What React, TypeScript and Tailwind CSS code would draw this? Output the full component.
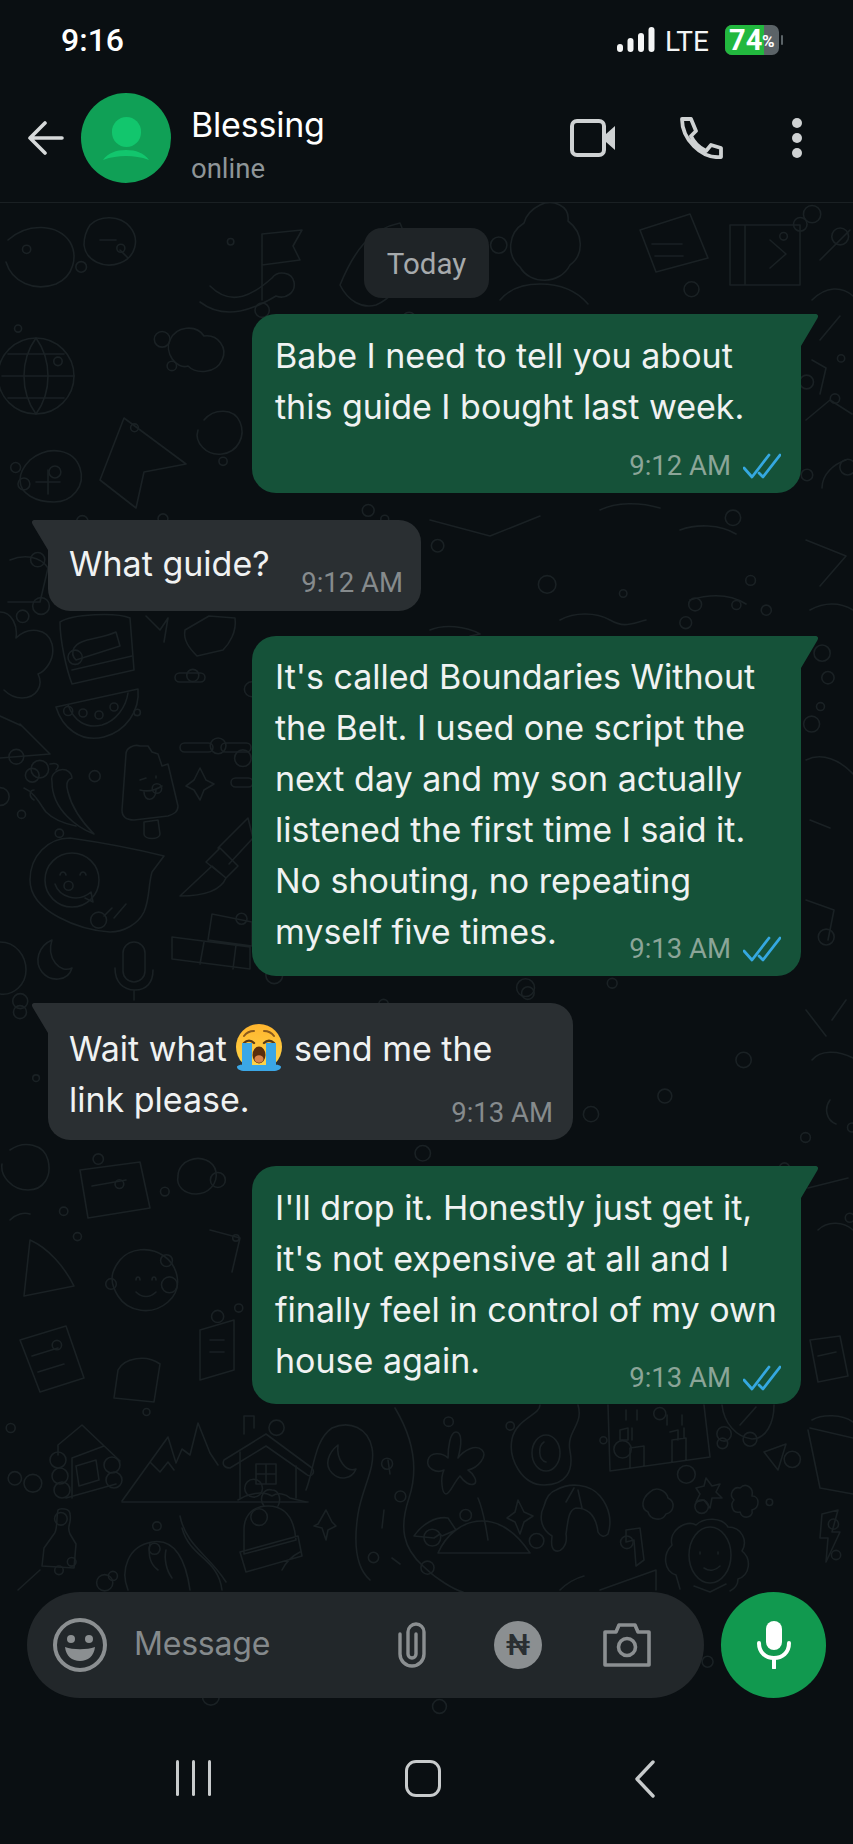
import type { ReactNode } from "react";

const FONT = "font-['Roboto','Liberation_Sans',sans-serif]";

// scattered little rings, seeded so that every run draws the same wallpaper
function ringList() {
  const rings: { x: number; y: number; r: number }[] = [];
  let seed = 41;
  const next = () => {
    seed = (seed * 16807) % 2147483647;
    return seed / 2147483647;
  };
  for (let i = 0; i < 230; i++) {
    rings.push({ x: next() * 853, y: 205 + next() * 1505, r: 3 + next() * 6 });
  }
  return rings;
}

function Wallpaper() {
  return (
    <svg
      className="absolute inset-0 w-full h-full"
      viewBox="0 203 853 1512"
      fill="none"
      stroke="#1a2124"
      strokeWidth="1.6"
      strokeLinecap="round"
      strokeLinejoin="round"
    >
      {ringList().map((c, i) => (
        <circle key={i} cx={c.x} cy={c.y} r={c.r} />
      ))}

      {/* top strip */}
      <path d="M262 300V234l40-4-9 16 7 14-38 5" />
      <path d="M210 286c22 22 44 8 62-8 6-8 20-6 22 4s-8 18-18 14c-20 12-50 26-76 6" />
      <path d="M8 240c20-18 50-16 62 2 8 14 4 34-14 42-22 8-44-2-50-22" />
      <path d="M340 285c14-34 30-56 60-62 14 30 4 70-24 82-14 4-28-4-36-20z" />
      <path d="M540 205c12-6 30 0 28 16 16 12 16 34 2 44-10 20-40 20-50 2-14-12-12-34 4-44 2-8 8-14 16-18z" />
      <path d="M500 300c10-12 24-16 40-16 20 0 36 6 48 20" />
      <path d="M640 230l50-16 18 44-52 14zM652 244h30M655 256h28" />
      <path d="M730 225h70v60h-70zM745 225v60M770 240l16 14-16 14" />
      <path d="M820 260l30-30M812 300c14-14 30-14 41-4" />
      <path d="M90 225c10-10 30-10 40 2s6 30-10 36-34-2-36-18c0-8 2-14 6-20zM100 240h16M120 250l8 8" />

      {/* left column, upper part */}
      <circle cx="36" cy="376" r="38" />
      <path d="M2 376h72M36 338c-16 22-16 54 0 76M36 338c16 22 16 54 0 76M8 354h56M8 398h56" />
      <path d="M100 480l24-62 62 46-42 8-8 36z" />
      <path d="M170 340c6-14 26-16 34-4 14-2 24 12 18 24-6 14-26 14-34 6-12 4-24-14-18-26z" />
      <path d="M30 460c20-16 44-10 50 8s-8 34-26 34-34-8-34-22c0-8 4-14 10-20z" />
      <path d="M48 470v24M36 482h24" />
      <path d="M100 540l56-14 14 44-56 14zM116 552l20-6" />
      <path d="M204 420c10-12 30-12 36 2s-2 30-18 32-28-12-24-24" />
      <path d="M10 560c14-6 30-4 38 8l-8 34-32 0" />
      <path d="M188 590c-8-14-2-28 14-32l36 6" />

      {/* purse and cloud */}
      <path d="M60 622c12-8 56-10 70-4l4 52-62 14c-6-16-12-44-12-62z" />
      <path d="M74 648c6-10 24-8 42-16l4 14-44 14c-4-4-4-8-2-12zM72 670l60-14" />
      <path d="M0 612c12 0 18 14 16 26 12-12 32-10 36 6s-8 28-14 30c6 12-2 24-16 24-8 0-14-4-18-8" />
      <path d="M185 630l24-14 26 2c2 14-6 26-12 32l-26 6c-8-8-14-16-12-26z" />
      <path d="M146 616l14 14 8-12-4 24" />
      <rect x="175" y="673" width="30" height="9" rx="4.5" />

      {/* watermelon */}
      <path d="M56 707l82-18c2 22-12 42-34 48-24 6-42-10-48-30z" />
      <path d="M68 705c6 16 18 24 34 20 14-4 24-18 26-32" />
      <circle cx="83" cy="713" r="4" />
      <circle cx="99" cy="715" r="4" />
      <circle cx="114" cy="707" r="4" />

      {/* triangle */}
      <path d="M0 716l22 10-2-2 30 30-50 4" />

      {/* chili */}
      <path d="M52 782c-2-8 6-14 14-12 4 2 6 4 6 8-6 2-6 8-4 14 4 16 16 32 26 42-16-6-42-24-42-52z" />
      <path d="M24 788c10 4 16 16 22 24 8 8 20 12 30 14" />
      <path d="M34 800c-6-4-4-10 0-10" />
      <path d="M56 770c4-4 2-8-6-6" />

      {/* popsicle */}
      <path d="M122 810l4-56c0-6 8-10 14-8l8 0 4 6 6 2 4 12 6-2 10 42c0 6-4 8-10 10l-34 4c-8 0-12-4-12-10z" />
      <path d="M144 822l14-2 2 14c0 6-16 6-16 0zM140 780l6-2M156 776l0 2M140 790c8 2 16 0 22-4M144 792c0 10 12 10 12-2" />
      <path d="M200 768l6 12 8 4-10 6-4 10-6-10-8-4 8-6z" />
      <rect x="180" y="743" width="33" height="9" rx="4.5" />
      <rect x="221" y="743" width="30" height="9" rx="4.5" />
      <rect x="231" y="778" width="22" height="9" rx="4.5" />

      {/* smiley speech blob */}
      <path d="M30 880c0-24 18-42 40-42 28 4 62 10 94 18l-12 16c-4 14-2 26-8 40-6 12-20 20-34 20-30-2-80-20-80-52z" />
      <circle cx="72" cy="880" r="27" />
      <path d="M60 875c1-4 5-4 6 0M80 875c1-4 5-4 6 0M55 884c4 12 22 20 36 8l2 10-8-4" />
      <path d="M104 916l8-8M114 918l12-14" />

      {/* pen */}
      <path d="M180 896l32-30 14 12c-6 14-24 18-46 18zM206 862l14-14 18 18-12 12zM218 848l30-30 5 20-24 26" />

      {/* panes */}
      <path d="M172 937l78 10v22l-78-10zM212 914l40 8v24l-44-6zM204 942l-4 22M236 945l-3 24" />

      {/* moon and capsule */}
      <path d="M52 940c-14 6-18 22-10 32s26 10 30-4c-12 6-26-10-20-28z" />
      <rect x="123" y="942" width="22" height="40" rx="11" />
      <path d="M115 968c0 14 8 22 20 22s18-8 18-20M134 990v10" />
      <path d="M0 942c16 0 26 14 26 28s-12 26-26 24" />

      {/* left column, under bubble four */}
      <path d="M10 1150c14-10 34-6 38 10s-4 30-20 30-28-14-26-26" />
      <path d="M80 1170l60-8 10 46-62 10z M92 1186l34-6" />
      <path d="M190 1160c10-4 24 0 26 12s-8 22-20 22-20-8-18-18c0-8 6-14 12-16z" />
      <path d="M30 1240c18 8 34 26 44 46l-50 10z" />
      <path d="M120 1260c10-12 30-14 44-4s20 32 4 46-40 10-50-6-6-26 2-36z" />
      <path d="M136 1280c0-4 4-4 4 0M152 1280c0-4 4-4 4 0M136 1292c6 6 14 6 20 0" />
      <path d="M200 1330l34-10v50l-34 10zM210 1340h14M210 1352h14" />
      <path d="M20 1340l46-14 18 52-44 14z M32 1356l26-8M38 1372l26-8" />
      <path d="M118 1370c6-12 28-16 42-6l-6 38-40-4z" />
      <path d="M10 1220c6-6 14-8 20-6M210 1230l30 8-8 34" />

      {/* cabin */}
      <path d="M58 1445l24-20 38 36M58 1445v10M72 1458l32-12M72 1458v40" />
      <circle cx="58" cy="1460" r="8" />
      <circle cx="60" cy="1476" r="8" />
      <circle cx="62" cy="1490" r="8" />
      <circle cx="112" cy="1465" r="8" />
      <circle cx="114" cy="1480" r="8" />
      <path d="M76 1466l20-6 3 20-20 6zM66 1498l50-14" />
      {/* mountains */}
      <path d="M122 1501l46-64 8 26 6-14 8 6 8-32 12 30 8 12M150 1462l10 10 8-10 6 8" />
      <path d="M122 1502h186" />
      {/* house */}
      <path d="M224 1460l42-26 46 34c4 6-2 10-6 6l-40-28-36 22c-6 0-8-4-6-8zM244 1434v-18h10v12" />
      <path d="M240 1452v46M296 1466v32M256 1464l20 0 0 20-20 0zM266 1464v20M256 1474h20" />
      <path d="M238 1500c10-6 24-10 34-4 6-4 14-2 18 2l16 4" />
      <path d="M338 1445c-10 8-14 20-6 28s20 6 24-4c-10 4-20-10-18-24z" />
      {/* road */}
      <path d="M306 1490c8-20 8-50 26-62 18-8 36 0 40 20 4 20-10 40-14 66s-4 52 12 66" />
      <path d="M395 1408c18 30 24 60 14 90s-6 50 14 68c14 14 32 24 40 26" />
      <path d="M180 1516c6 30 30 40 46 66M388 1460l2 14M384 1510l-2 18M392 1558l8 6" />
      {/* flower and tree */}
      <path d="M460 1476c-6 6-10 18-14 18s-6-16-2-24c-8 4-18-2-16-10s14-8 20-2c0-10 2-26 8-26s6 12 2 26c6-8 18-14 24-8s-4 18-14 20c6 4 10 12 6 14s-10-2-14-8z" />
      <path d="M478 1498c6 14 8 30 10 42M518 1500l6 12 9 4-9 6-4 12-5-12-8-4 8-6z" />
      {/* umbrella */}
      <path d="M438 1553c8-18 24-32 44-32s36 14 48 32zM414 1536c8-12 22-20 34-18l8 12-14 6-2-2-6 4z" />
      {/* egg */}
      <path d="M540 1405c0 10-24 14-28 34s10 46 32 46 30-14 26-34 14-26 8-46" />
      <ellipse cx="546" cy="1453" rx="14" ry="18" />
      <path d="M544 1442c-6 4-6 18 2 20" />
      {/* croissant */}
      <path d="M556 1490c14-8 34-6 44 6s12 26 8 38c-4 4-8 2-10-2-2-16-10-24-22-24-8 2-8 14-10 26 2 12-6 20-12 16-4-4-2-10-2-14-10-6-14-18-8-30 2-8 6-14 12-16zM566 1502l8-14M582 1508l-4-18" />
      <path d="M626 1530l14-2 4 32-8 6-2-26-8 2z" />
      {/* buildings */}
      <path d="M608 1405l2 66 100-14-6-52M626 1410v10M637 1410v10M667 1415v10M682 1415v10M620 1430l8-2 0 12-8 0zM632 1428v12M670 1432l8-2v10M684 1428v10M630 1468v-20l14-2v20M672 1462v-22l14-2v22" />
      <path d="M722 1405c2 18 14 32 30 34 14 0 22-16 22-34M740 1425l16-18" />
      <path d="M764 1452l22-8-8 26z" />
      <path d="M706 1478l6 8 8-2-4 8 6 6-10 0-2 10-6-8-8 2 4-8-4-6 8-2z" />
      <path d="M740 1488c6-6 14 0 12 8 8 0 8 12 0 14 2 8-10 10-12 2-8 2-10-8-6-12-6-6 0-14 6-12z" />
      <path d="M650 1492c6-6 16-2 18 6 8 4 6 14-2 16-4 8-16 6-18-2-8-4-6-14 2-20z" />
      <path d="M810 1428l43 10M808 1430l12 58 33 6" />
      <path d="M822 1514l16-4-6 22 8 0-14 30 2-24-8 0z" />
      {/* person with curls */}
      <path d="M672 1545c-4-14 14-26 24-20 8-8 26-8 32 2 14 0 20 14 14 24 10 8 8 24-4 28 0 6-4 10-8 12M672 1545c-10 10-8 26 4 30l4 14" />
      <ellipse cx="710" cy="1555" rx="21" ry="28" />
      <path d="M700 1552v2M718 1552v2M704 1568c6 4 12 2 16-2M694 1586l16 6 16-8" />
      {/* hat */}
      <path d="M244 1530c0-16 10-24 24-24 16 0 26 10 28 34l-52 14zM240 1552l58-16 4 20-56 16zM264 1506c-6-8 0-18 8-16 6 0 10 8 6 16M300 1552c-8 4-14 10-18 18" />
      <path d="M318 1524l8-14 6 12 4 4-8 4-2 10-4-12-8-2z" />
      <path d="M58 1510c2-2 12-2 12 4 2 10-4 12 0 20l6 10-2 24-32-2 2-18 10-14c4-4 2-16 4-24z" />
      <path d="M40 1570l-22 20" />
      <path d="M128 1590c-8-20 0-44 24-48s34 20 38 48M150 1544c-2 10 0 20 8 26M166 1550c-2 8 0 20 6 28" />
      <path d="M182 1528c8 30 36 30 40 62" />
      <path d="M560 1590c6-6 16-12 24-14" />
      <path d="M600 1590l56-20v20" />
      <path d="M810 1340l30-4 8 40-30 6zM818 1356l18-4" />
      <path d="M812 1420c10-6 30-6 41 2M808 1188l40-10M818 1230c10-10 26-8 35 0M812 1060c8-10 26-10 41-2M830 1100c-6 8-4 20 6 24" />
      <path d="M806 1010l20 26M846 1000l-14 20M806 900l28 10-6 30M806 760c16-8 34 0 47 14M810 820l20 8M810 610c14-8 30-8 43 0M806 540l40 16-26 30M846 460c-12 4-24 14-24 28M806 420l24-20 22 14M812 360l14 8-6 26M820 340l20-24" />
      <path d="M430 630c14-6 36-4 50 4l-10 2M560 620c14-8 36-8 50 0s20 4 36 0M690 600c20-6 40-6 56 4" />
      <path d="M430 520l60 16 50-20M600 510c16-8 40-8 60-2M680 530c16-6 40-6 56 4" />
    </svg>
  );
}

function DoubleTicks() {
  return (
    <svg width="38" height="26" viewBox="0 0 38 26" fill="none" stroke="#35a8e0" strokeWidth="2.8" strokeLinecap="round" strokeLinejoin="round">
      <path d="M1 15l8 9L26 2" />
      <path d="M16 20l4 4L37 2" />
    </svg>
  );
}

function Bubble({
  out,
  time,
  className,
  timeClass,
  children,
}: {
  out?: boolean;
  time: string;
  className: string;
  timeClass: string;
  children: ReactNode;
}) {
  return (
    <div className={`relative flex flex-col shrink-0 ${className} ${out ? "bg-[#155239] rounded-[24px] rounded-tr-none self-end mr-[52px]" : "bg-[#2a2f32] rounded-[22px] rounded-tl-none self-start ml-[48px]"}`}>
      {/* tail */}
      {out ? (
        <svg className="absolute left-full top-0" width="17" height="32" viewBox="0 0 17 32">
          <path d="M0 0h14c3 0 4 2 2 5L0 32z" fill="#155239" />
        </svg>
      ) : (
        <svg className="absolute right-full top-0" width="16" height="30" viewBox="0 0 16 30">
          <path d="M16 0H3C0 0-1 2 1 5l15 25z" fill="#2a2f32" />
        </svg>
      )}
      <div className="font-['Inter',sans-serif] text-[34px] leading-[51px] text-[#f0f2f2] whitespace-nowrap">{children}</div>
      <div className={`flex justify-end items-center gap-[12px] ${timeClass}`}>
        <span className={`text-[27.5px] leading-[32px] ${out ? "text-[#8ba598]" : "text-[#868b8d]"}`}>{time}</span>
        {out && <DoubleTicks />}
      </div>
    </div>
  );
}

function CryingFace() {
  return (
    <svg className="inline-block align-[-12px] ml-[8px] mr-[11px]" width="48" height="50" viewBox="0 0 48 50">
      <defs>
        <linearGradient id="faceFill" x1="0" y1="0" x2="0" y2="1">
          <stop offset="0" stopColor="#ffb52e" />
          <stop offset="1" stopColor="#ffd84a" />
        </linearGradient>
      </defs>
      <circle cx="24" cy="24" r="23" fill="url(#faceFill)" />
      <path d="M9 13c3-4 7-5 10-5M39 13c-3-4-7-5-10-5" stroke="#8a5a1c" strokeWidth="2" fill="none" strokeLinecap="round" />
      <path d="M9 20c3-3 7-3 10 0M29 20c3-3 7-3 10 0" stroke="#5b3a16" strokeWidth="2.4" fill="none" strokeLinecap="round" />
      <path d="M7 20h10v25H7zM31 20h10v25H31z" fill="#3ba7e6" />
      <path d="M2 44c0-2 6-3 14-2l16 0c8-1 14 0 14 2s-3 4-8 4H10c-5 0-8-2-8-4z" fill="#3ba7e6" />
      <ellipse cx="24" cy="32" rx="6.5" ry="8.5" fill="#5a2d0c" />
      <ellipse cx="24" cy="36" rx="4.5" ry="3.8" fill="#d9824a" />
    </svg>
  );
}

export default function App() {
  return (
    <div className={`w-[853px] h-[1844px] flex flex-col bg-[#0a0f12] overflow-hidden ${FONT}`}>
      {/* status bar */}
      <div className="h-[80px] shrink-0 flex items-center justify-between pl-[61px] pr-[70px] pb-[1px]">
        <span className="text-[32px] leading-none font-medium text-white">9:16</span>
        <div className="flex items-center">
          <svg width="38" height="25" viewBox="0 0 38 25" fill="#f4f5f5">
            <rect x="0" y="17" width="6" height="8" rx="3" />
            <rect x="10.5" y="11" width="6" height="14" rx="3" />
            <rect x="21" y="6" width="6" height="19" rx="3" />
            <rect x="31.5" y="0" width="6" height="25" rx="3" />
          </svg>
          <span className="ml-[10px] mt-[4px] text-[28px] leading-none text-[#f4f5f5]">LTE</span>
          <div className="ml-[16px] relative w-[54px] h-[30px] rounded-[7px] bg-[#5b6367] flex">
            <div className="w-[39px] rounded-l-[7px] bg-[#22b83e]" />
            <span className="absolute left-[4px] top-[1px] text-[29px] leading-[28px] font-bold text-white">74</span>
            <span className="absolute left-[37px] top-[7px] text-[17px] leading-[18px] font-bold text-white">%</span>
          </div>
          <div className="ml-[2px] w-[2px] h-[10px] rounded-full bg-[#5b6367]" />
        </div>
      </div>

      {/* chat header */}
      <div className="h-[123px] shrink-0 flex items-center border-b border-[#1a2023] pb-[6px] pr-[50px]">
        <svg className="ml-[28px]" width="36" height="34" viewBox="0 0 36 34" fill="none" stroke="#d6d9da" strokeWidth="3.6" strokeLinecap="round" strokeLinejoin="round">
          <path d="M17 2L2 17l15 15M2 17h32" />
        </svg>
        <div className="ml-[17px] w-[90px] h-[90px] rounded-full bg-[#10a056] flex flex-col items-center justify-center">
          <div className="w-[29px] h-[30px] rounded-full bg-[#12c66d]" />
          <svg className="mt-[3px]" width="46" height="10" viewBox="0 0 46 10">
            <path d="M0 10C5 3 13 0 23 0s18 3 23 10C38 7 31 6 23 6S8 7 0 10z" fill="#12c66d" />
          </svg>
        </div>
        <div className="ml-[20px] pt-[12px] flex flex-col">
          <span className="font-['Inter',sans-serif] text-[34px] leading-[42px] tracking-[-0.2px] text-white">Blessing</span>
          <span className="text-[27.5px] leading-[32px] mt-[7px] text-[#8e9598]">online</span>
        </div>
        <div className="ml-auto flex items-center">
          <svg width="46" height="38" viewBox="0 0 46 38" fill="none">
            <rect x="2" y="2" width="32" height="34" rx="5" stroke="#cfd2d3" strokeWidth="4" />
            <path d="M36 15l9-8v24l-9-8z" fill="#cfd2d3" />
          </svg>
          <svg className="ml-[63px]" width="44" height="42" viewBox="0 0 44 42" fill="none" stroke="#cfd2d3" strokeWidth="3.8" strokeLinejoin="round">
            <path d="M3 2h9l5 12-5 5c3 7 9 12 15 15l5-6 10 3v9C22 42 3 22 3 2z" />
          </svg>
          <svg className="ml-[68px]" width="12" height="42" viewBox="0 0 12 42" fill="#cfd2d3">
            <circle cx="6" cy="6" r="5" />
            <circle cx="6" cy="21" r="5" />
            <circle cx="6" cy="36" r="5" />
          </svg>
        </div>
      </div>

      {/* conversation */}
      <div className="relative flex-1 flex flex-col">
        <Wallpaper />
        <div className="relative flex-1 flex flex-col pt-[25px] pb-[17px]">
          <div className="self-center w-[125px] h-[70px] rounded-[18px] bg-[#1f2427] flex items-center justify-center pt-[2px] text-[29.5px] text-[#a6aaac]">
            Today
          </div>

          <Bubble out time="9:12 AM" className="w-[549px] mt-[16px] pl-[23px] pr-[20px] pt-[16px] pb-[11px]" timeClass="mt-[18px]">
            Babe I need to tell you about
            <br />
            this guide I bought last week.
          </Bubble>

          <Bubble time="9:12 AM" className="w-[373px] mt-[27px] pl-[21px] pr-[18px] pt-[18px] pb-[12px]" timeClass="-mt-[22px]">
            What guide?
          </Bubble>

          <Bubble out time="9:13 AM" className="w-[549px] mt-[25px] pl-[23px] pr-[20px] pt-[15px] pb-[11px]" timeClass="-mt-[24px]">
            It's called Boundaries Without
            <br />
            the Belt. I used one script the
            <br />
            next day and my son actually
            <br />
            listened the first time I said it.
            <br />
            No shouting, no repeating
            <br />
            myself five times.
          </Bubble>

          <Bubble time="9:13 AM" className="w-[525px] mt-[27px] pl-[21px] pr-[20px] pt-[20px] pb-[11px]" timeClass="-mt-[28px]">
            Wait what
            <CryingFace />
            send me the
            <br />
            link please.
          </Bubble>

          <Bubble out time="9:13 AM" className="w-[549px] mt-[26px] pl-[23px] pr-[20px] pt-[16px] pb-[10px]" timeClass="-mt-[24px]">
            I'll drop it. Honestly just get it,
            <br />
            it's not expensive at all and I
            <br />
            finally feel in control of my own
            <br />
            house again.
          </Bubble>

          {/* composer */}
          <div className="mt-auto flex items-center gap-[17px] px-[27px]">
            <div className="w-[677px] h-[106px] rounded-[53px] bg-[#22272a] flex items-center pl-[26px]">
              <svg width="54" height="54" viewBox="0 0 54 54" fill="none" stroke="#8b8f91" strokeWidth="4">
                <circle cx="27" cy="27" r="25" />
                <circle cx="18" cy="21" r="4" fill="#8b8f91" stroke="none" />
                <circle cx="36" cy="21" r="4" fill="#8b8f91" stroke="none" />
                <path d="M12 29c8 3 22 3 30 0-1 9-7 14-15 14s-14-5-15-14z" fill="#8b8f91" stroke="none" />
              </svg>
              <span className="ml-[27px] mb-[2px] w-[140px] font-['Inter',sans-serif] text-[32px] leading-none tracking-[-0.2px] text-[#858a8c]">Message</span>
              <svg className="ml-[124px]" width="28" height="46" viewBox="0 0 28 46" fill="none" stroke="#8b8f91" strokeWidth="3.4" strokeLinecap="round">
                <path d="M2 12v20a12 12 0 0 0 24 0V10A8 8 0 0 0 10 10v22a4 4 0 0 0 8 0V12" />
              </svg>
              <div className="ml-[68px] w-[48px] h-[48px] rounded-full bg-[#8b8f91] flex items-center justify-center text-[30px] leading-none font-medium text-[#2a2f32]">
                ₦
              </div>
              <svg className="ml-[61px]" width="48" height="44" viewBox="0 0 48 44" fill="none" stroke="#8b8f91" strokeWidth="3.6" strokeLinejoin="round">
                <path d="M2 9h11l3-7h16l3 7h11v33H2z" />
                <circle cx="24" cy="24" r="8.5" />
              </svg>
            </div>
            <div className="w-[105px] h-[106px] rounded-full bg-[#11994f] flex items-center justify-center">
              <svg width="34" height="48" viewBox="0 0 34 48" fill="none">
                <rect x="9" y="0" width="16" height="29" rx="8" fill="#ffffff" />
                <path d="M2 22c0 10 7 15 15 15s15-5 15-15" stroke="#ffffff" strokeWidth="4" strokeLinecap="round" />
                <path d="M17 37v10" stroke="#ffffff" strokeWidth="4" strokeLinecap="round" />
              </svg>
            </div>
          </div>
        </div>
      </div>

      {/* android nav */}
      <div className="h-[129px] shrink-0 relative flex items-start pt-[45px] pl-[176px]">
        <div className="flex gap-[13px]">
          <div className="w-[3px] h-[36px] rounded-full bg-[#c8cbcc]" />
          <div className="w-[3px] h-[36px] rounded-full bg-[#c8cbcc]" />
          <div className="w-[3px] h-[36px] rounded-full bg-[#c8cbcc]" />
        </div>
        <div className="ml-[194px] w-[36px] h-[37px] rounded-[11px] border-[3.5px] border-[#c8cbcc]" />
        <svg className="ml-[193px]" width="22" height="38" viewBox="0 0 22 38" fill="none" stroke="#c8cbcc" strokeWidth="3.4" strokeLinecap="round" strokeLinejoin="round">
          <path d="M19 2L3 19l16 17" />
        </svg>
      </div>
    </div>
  );
}
